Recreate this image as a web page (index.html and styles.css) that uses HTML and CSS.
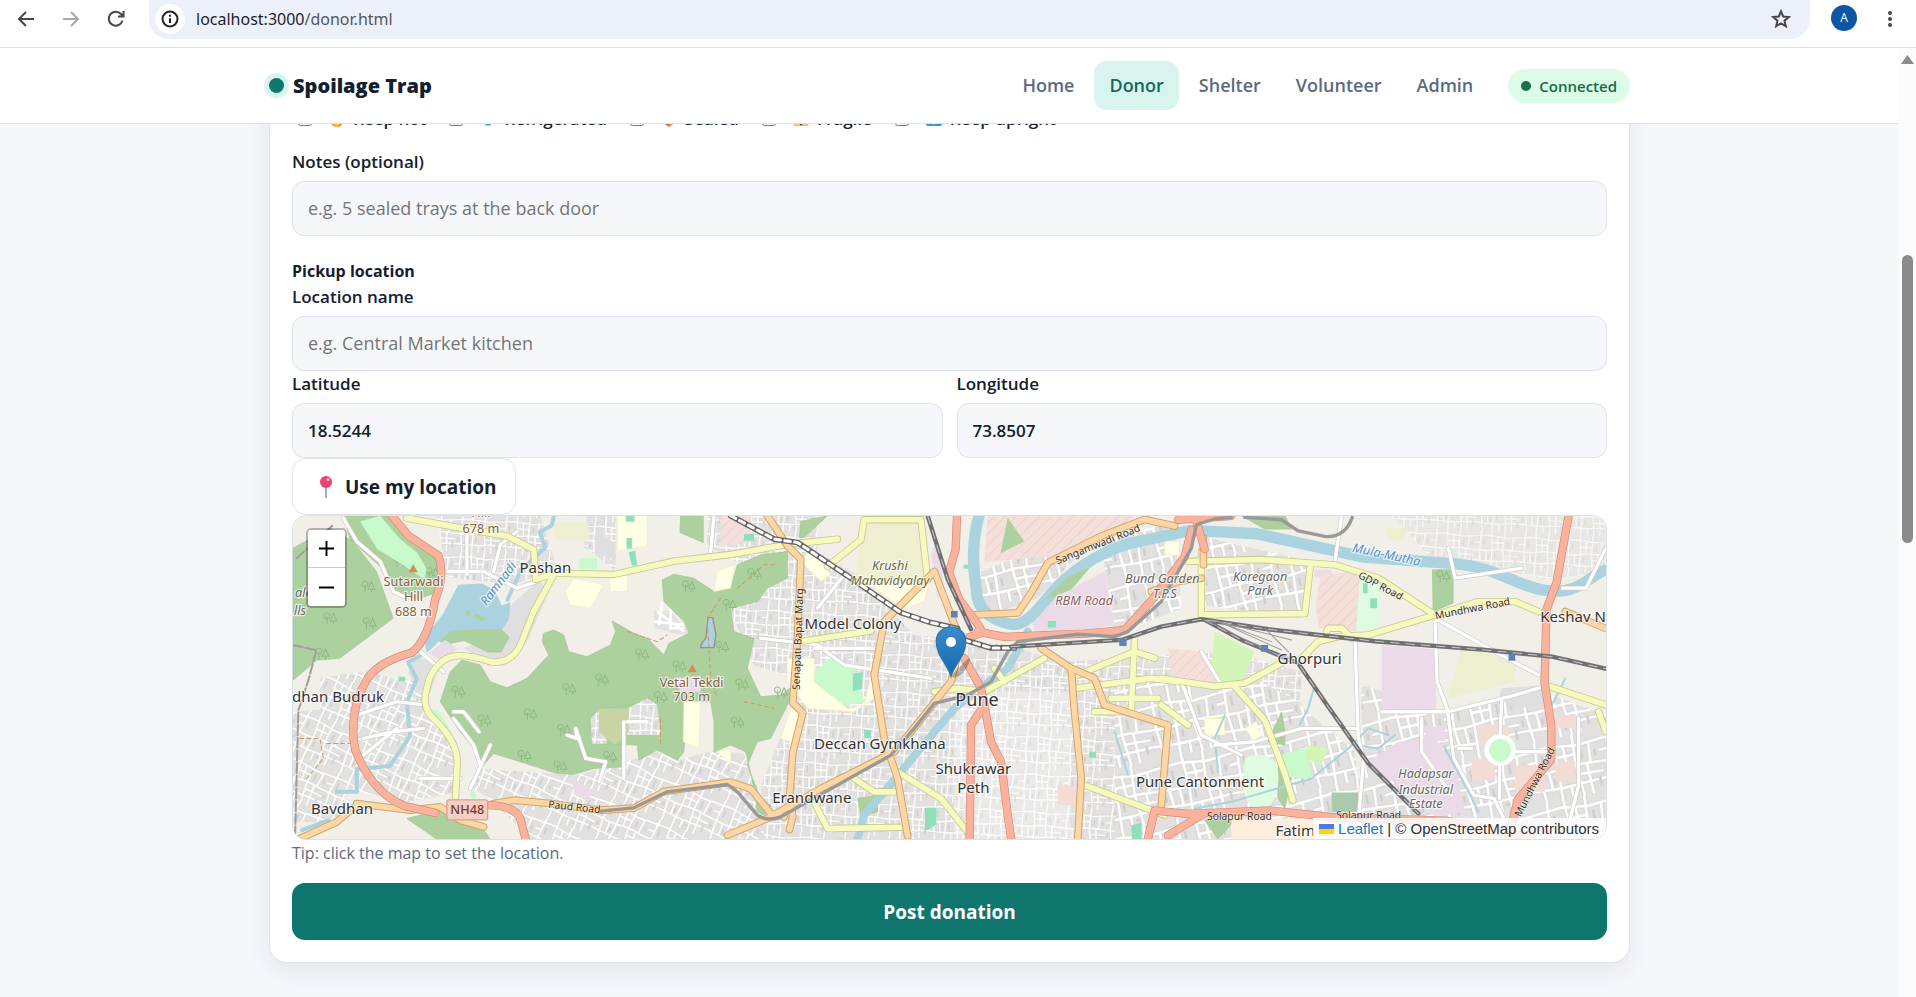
FILE: index.html
```html
<!DOCTYPE html>
<html lang="en">
<head>
<meta charset="utf-8">
<meta name="viewport" content="width=device-width, initial-scale=1">
<title>Spoilage Trap – Donor</title>
<link rel="stylesheet" href="styles.css">
</head>
<body>
<div class="browser">
  <button class="tool" type="button" aria-label="Back"><svg viewBox="0 0 20 20"><path d="M18 10H3M10 3l-7 7 7 7"/></svg></button>
  <button class="tool tool-off" type="button" aria-label="Forward"><svg viewBox="0 0 20 20"><path d="M2 10h15M10 3l7 7-7 7"/></svg></button>
  <button class="tool" type="button" aria-label="Reload"><svg viewBox="0 0 20 20"><path d="M16.500 11.500A7 7 0 1 1 15 5l2 2M17.500 2v5.500H12"/></svg></button>
  <div class="address">
    <button class="site-info" type="button" aria-label="Site information"><svg viewBox="0 0 20 20"><circle cx="10" cy="10" r="7.500"/><path d="M10 9.300v4.700M10 5.800v1.900"/></svg></button>
    <span class="url">localhost:3000<span class="url-path">/donor.html</span></span>
    <button class="tool star" type="button" aria-label="Bookmark"><svg viewBox="0 0 20 20"><path d="M10 2.300l2.200 5.200 5.600.5-4.300 3.700 1.300 5.500-4.800-2.900-4.800 2.900 1.300-5.500L2.200 8l5.600-.5z"/></svg></button>
  </div>
  <button class="avatar" type="button" aria-label="Profile">A</button>
  <button class="tool dots" type="button" aria-label="Menu"><svg viewBox="0 0 20 20"><circle cx="10" cy="4" r="2"/><circle cx="10" cy="10" r="2"/><circle cx="10" cy="16" r="2"/></svg></button>
</div>
<div class="viewport">
  <div class="document">
    <header class="topbar">
      <div class="topbar-inner">
        <a class="brand" href="#"><span class="brand-dot"></span>Spoilage Trap</a>
        <nav class="nav">
          <a href="#">Home</a>
          <a class="active" href="#">Donor</a>
          <a href="#">Shelter</a>
          <a href="#">Volunteer</a>
          <a href="#">Admin</a>
        </nav>
        <span class="status"><span class="status-dot"></span>Connected</span>
      </div>
    </header>
    <main class="page">
      <form class="card">
        <div class="checks">
          <label><input type="checkbox"><svg viewBox="0 0 18 18"><path d="M9 0c1 4 7 6 7 11a7 7 0 0 1-14 0c0-3 2-4 3-7l2 3z" fill="#e8832f"/><path d="M10 7c3 2 4 9-1 11-4-1-5-5-2-7l1 2z" fill="#fcc21b"/></svg>Keep hot</label>
          <label><input type="checkbox"><svg viewBox="0 0 18 18"><path d="M9 1v16M2 5l14 8M16 5L2 13M6 2l3 3 3-3M6 16l3-3 3 3" fill="none" stroke="#4fb3f5" stroke-width="2"/></svg>Refrigerated</label>
          <label><input type="checkbox"><svg viewBox="0 0 18 18"><path d="M9 1l7 4v8l-7 5-7-5V5z" fill="#b97549"/><path d="M9 9l7-4v8l-7 5z" fill="#d69667"/></svg>Sealed</label>
          <label><input type="checkbox"><svg viewBox="0 0 18 18"><path d="M9 1l9 16H0z" fill="#ffb871"/><path d="M9 6v6M9 14v2" stroke="#3d3026" stroke-width="2"/></svg>Fragile</label>
          <label><input type="checkbox"><svg viewBox="0 0 18 18"><rect width="18" height="17" rx="2" fill="#3d93e3"/><path d="M9 15V4M5 8l4-4 4 4" fill="none" stroke="#fff" stroke-width="2"/></svg>Keep upright</label>
        </div>
        <div class="field notes">
          <label for="notes">Notes (optional)</label>
          <input id="notes" type="text" placeholder="e.g. 5 sealed trays at the back door">
        </div>
        <h2>Pickup location</h2>
        <div class="field">
          <label for="place">Location name</label>
          <input id="place" type="text" placeholder="e.g. Central Market kitchen">
        </div>
        <div class="pair">
          <div class="field"><label for="lat">Latitude</label><input id="lat" type="text" value="18.5244"></div>
          <div class="field"><label for="lng">Longitude</label><input id="lng" type="text" value="73.8507"></div>
        </div>
        <button class="locate" type="button"><svg viewBox="0 0 18 24"><path d="M9 12v11" stroke="#8d969d" stroke-width="1.600"/><circle cx="9" cy="7" r="6" fill="#ee3f70"/><circle cx="11" cy="4.500" r="1.600" fill="#ffc0d2"/></svg>Use my location</button>
        <div class="map">
          <svg class="map-canvas" viewBox="39 33 3933 969" preserveAspectRatio="xMidYMid slice" role="img" aria-label="Map of Pune">
            <defs>
              <pattern id="streets" width="156" height="132" patternUnits="userSpaceOnUse" patternTransform="rotate(3) scale(.850)">
                <rect width="156" height="132" fill="#e3e1df"/>
                <path d="M0 20L50 16 110 24 156 20M0 68l42 2 60-6 54 4M0 104l60 4 96-4M22 0l-4 68 6 64M58 0l4 66-4 66M104 0l-4 64 6 68M136 20l-4 48M80 18l2 50M40 70l2 36M124 68l2 64M82 106v26M0 44l20-2M62 42h40M104 86l52 2" fill="none" stroke="#cfcdcb" stroke-width="9"/>
                <path d="M0 20L50 16 110 24 156 20M0 68l42 2 60-6 54 4M0 104l60 4 96-4M22 0l-4 68 6 64M58 0l4 66-4 66M104 0l-4 64 6 68M136 20l-4 48M80 18l2 50M40 70l2 36M124 68l2 64M82 106v26M0 44l20-2M62 42h40M104 86l52 2" fill="none" stroke="#fff" stroke-width="6"/>
                <path d="M32 30v22M72 78v18M116 34v22M146 40v14M8 80v14M50 84v14M146 98v20M92 118h10" stroke="#cfcccb" stroke-width="5"/>
              </pattern>
              <pattern id="streets-b" href="#streets" patternTransform="rotate(24)"/>
              <pattern id="streets-c" href="#streets" patternTransform="rotate(-12) scale(1.400)"/>
              <pattern id="hatch" width="24" height="24" patternUnits="userSpaceOnUse" patternTransform="rotate(45)"><rect width="24" height="24" fill="#f4e0da"/><path d="M0 0v24" stroke="#f2c9c2" stroke-width="4"/></pattern>
              <linearGradient id="pin" x1="0" y1="0" x2="0" y2="1"><stop offset="0" stop-color="#3a8ccb"/><stop offset="1" stop-color="#1467ae"/></linearGradient>
              <g id="tree-set" fill="none" stroke="#8dba82" stroke-width="3"><path d="M-10-16a9 9 0 1 0 1 0zM-9-6v24M10-14L0 8h20zM10 8v10"/></g>
            </defs>
            <rect x="39" y="33" width="3933" height="969" fill="#f2efe9"/>

            <!-- Built-up areas -->
            <path fill="url(#streets)" d="M470 33H780L830 190 700 240 640 235 500 215ZM920 33h85v165l-50-40-45-30ZM1280 33h330v130l-240 10-90-50Z"/>
            <path fill="url(#streets-b)" d="M120 520l120-20 180 30 20 100 90 80 10 150-160 30-200-40-60-120ZM39 620l120-10 60 160-40 180H39ZM590 790l300 20 180-50 60-20 60 26 110-30 90 10 60 150 60 0v106H750L640 890l-60-40ZM930 640l30-30 20 106-45 0ZM1050 600l60-20 30 110h-110Z"/>
            <path fill="#e3e1df" d="M1120 318l50 0 60 70-40 0-70-20Z"/>
            <path fill="none" stroke="#fff" stroke-width="8" d="M1130 320l80 60M1145 290l-10 70M1170 310l0 60 40 0M1120 350l90 10"/>
            <path fill="url(#streets)" d="M1350 320l110-60 110-140 160 90 170 180 280 30 160 50 500-30 220 60v502H1450l-10-160 90-220 0-110-110-30Z"/>
            <path fill="url(#streets-c)" d="M2100 200l250-100 60 30-140 150-170 60ZM2460 110l220-60 20 260-200 80ZM2780 100l310 70-30 170-290-40ZM2500 560l330-90 200 110 190 160 30 262H2500ZM3240 540l260 80 280-60 192 70v372H3240Z"/>
            <path fill="url(#streets)" d="M3330 33h640v170l-190 20-150-40-190-30Z" opacity=".6"/>
            <path fill="#fff" fill-opacity=".3" d="M2020 560h350v440h-350z"/>
            <path fill="#e0dfdf" d="M770 230l40 20-70 160-50 60-90-10-50-30 70-30 50-80ZM400 455l80 20-30 90-40-10-25-50ZM945 70l60 50v45l-60-20ZM3660 550l130-10v60l-90 10-50-30Z"/>

            <!-- Woods -->
            <g fill="#add19e" stroke="#9fc491" stroke-width="2">
              <path d="M190 33h140l90 80 60 60-10 90-60 20-60-20-30-60-110-100ZM39 130l110-60 70 40 70 90 50 140-160 120-70 6-70 60ZM1200 33h68v80l-70-30ZM500 375l90-8 66 0 30 30-24 44-40 0-70-34-50 10-30-10Z"/>
              <path d="M480 590L510 500 545 465 600 480 630 530 680 548 740 520 805 450 785 410 790 385 820 375 850 390 865 440 920 455 990 420 1005 380 995 348 1060 385 1100 400 1150 450 1165 415 1225 385 1210 350 1150 290 1145 225 1180 208 1240 220 1300 260 1350 250 1370 180 1440 150 1520 140 1520 220 1460 250 1430 290 1350 310 1360 380 1420 400 1400 490 1440 575 1500 570 1540 540 1530 580 1500 640 1470 700 1430 710 1400 780 1440 880 1470 900 1450 930 1430 920 1420 850 1395 740 1350 720 1300 740 1300 650 1290 590 1220 590 1210 740 1190 765 1130 735 1075 765 1070 720 940 715 925 640 960 610 1050 600 1110 580 1120 600 1040 650 1025 785 940 790 880 808 830 805 720 770 640 745 600 790 590 740 540 680Z"/>
              <path d="M380 940l120-30 110 64 20 28H470ZM1560 50l80-17-70 65-14 0ZM2180 40l50 70-72 35ZM1730 880l60-10v50l-50 10ZM2880 33h130l20 40-80 0ZM3452 195h62v100l-60 24ZM3000 620l10 60 0 40-50-10ZM2770 945h90l-50 57ZM2990 740l40 80-20 90-20-30Z"/>
            </g>
            <path fill="url(#streets)" d="M930 640l30-30 20 106-45 0ZM1040 610l60-30 30 20 10 90h-100Z"/>
            <path fill="#abc9ac" d="M3150 862h80v58h-80z"/>
            <use href="#tree-set" x="360" y="168"/><use href="#tree-set" x="264" y="245"/><use href="#tree-set" x="150" y="340"/><use href="#tree-set" x="268" y="355"/><use href="#tree-set" x="126" y="446"/><use href="#tree-set" x="456" y="205"/><use href="#tree-set" x="534" y="560"/><use href="#tree-set" x="612" y="646"/><use href="#tree-set" x="750" y="628"/><use href="#tree-set" x="866" y="552"/><use href="#tree-set" x="964" y="524"/><use href="#tree-set" x="850" y="674"/><use href="#tree-set" x="732" y="752"/><use href="#tree-set" x="840" y="784"/><use href="#tree-set" x="988" y="756"/><use href="#tree-set" x="1084" y="448"/><use href="#tree-set" x="1196" y="484"/><use href="#tree-set" x="1224" y="244"/><use href="#tree-set" x="1324" y="426"/><use href="#tree-set" x="1140" y="576"/><use href="#tree-set" x="1420" y="206"/><use href="#tree-set" x="1346" y="300"/><use href="#tree-set" x="1384" y="538"/><use href="#tree-set" x="1370" y="652"/><use href="#tree-set" x="1500" y="562"/><use href="#tree-set" x="3484" y="214"/>

            <!-- Parks, schools, campuses, industry -->
            <path fill="#c8facc" d="M240 50l60-17 60 70 50 40 30 50-8 30-60-40-80-50ZM1560 530l90-70 70 20 30 110-100 20-40-40ZM445 615l30 0 34 60-30 0ZM3000 750l60-20 20 0 10 90-80-5ZM895 160h55v32h-55zM575 850l15 20-10 14-12-14ZM3610 700h90v60h-90z"/>
            <path fill="#dffce2" d="M2890 760q60-30 96 20 16 70-20 120-40 30-66-10-20-70-10-130ZM3235 210l60 30-6 130-65 10Z"/>
            <path fill="#ffffe5" d="M880 220l90 20-40 70-60-10-15-40ZM985 210l56 0v50h-50ZM1010 33h90v90l-90 15ZM1520 460h80v70l100 80 50-10 30-130 0 110-60 40-140-10-60-80ZM1530 610l36 10-10 100-56-20ZM1210 590l50 0-6 140-46-20ZM1840 150l60-80 50 140-20 80-60 20-90-60 40-60ZM1590 130l60 80-30 20-60-60ZM2650 110h44v40h-44zM2890 670l34-20 16 40-20 20ZM1310 200l50-20-10 70-50 10ZM1310 740l40-10v50ZM2770 640h60v50h-60z" stroke="#f0efb8" stroke-width="2"/>
            <path fill="#edefd0" d="M1750 60l180-20 0 180-50 20-160-10ZM3540 420l160 50v60l-200 50ZM820 55h105v50l-100 0ZM3310 70l70 0-20 40-40-6Z"/>
            <path fill="#c9d3a3" d="M955 610h90v70l-40 40-50-40Z"/>
            <path fill="#d4f5b8" d="M2800 380l120 60-40 90-60 10-30-60ZM3080 720l60 10-20 50-50-20Z"/>
            <path fill="#ebdbe8" d="M445 445l50-40 36 26-40 40ZM3300 420l165 14-2 180H3300ZM3260 770l90-60 110-8 60 80 30 140-90 10ZM870 815l65 40-10 35-40-20ZM1180 520l80-8v50l-60 0ZM3430 660l60 12v36l-60 0ZM1950 150l20 130 20-30-20-150ZM3100 195l50 0v24l-50 0ZM2240 320l230-120 30 160-230 40Z"/>
            <path fill="url(#hatch)" d="M2120 33h440l-50 60-200 60-200 20ZM3116 210l120-10-12 180-110-10-12-60ZM2660 430l110 10 30 90-130-12ZM1320 33h90v80l-90 10Z"/>
            <path fill="#add19e" d="M2180 40l50 70-72 35Z"/>
            <path fill="#f4dcd6" d="M3590 660h90v60h-90zM3700 780h90v80h-90zM3820 630h66v38h-66zM3570 760h70v65h-70zM2330 840h60v60h-60zM3820 770h60v60h-60z"/>
            <path fill="#ffeedd" d="M2850 940h270v62h-270z"/>
            <path fill="#8edfba" d="M1036 33h26v18h-26zM1038 100h16v32h-16zM1044 142l20-4 6 44h-16ZM355 515h20v14h-20zM1716 506l30-4-2 50-28 6ZM2048 180h18v12h-18zM1932 908h34v50l-34 20ZM2550 960l30-8 2 50h-30ZM3244 235h14v30h-14zM3266 280h20v30h-20zM1750 675h20v24h-20zM2300 348h24v20h-24zM2424 740h20v18h-20zM1390 88h30v20h-30z"/>

            <!-- Water -->
            <path fill="#aad3df" d="M534 240l70-4 40 20 20 46 26-10-4 50-20 30-66 0-90 6-70 66-10-40 60-80Z"/>
            <path fill="#aad3df" stroke="#a58a8a" stroke-width="4" d="M1262 418l14-20 6-60 14 0 10 50-6 40h-40z"/>
            <path fill="#add19e" d="M556 320l10-4 4 14-10 4zM580 326l20 4 14 14-10 4-20-10z"/>
            <g fill="none" stroke="#aad3df" stroke-linecap="round" stroke-linejoin="round">
              <path stroke-width="12" d="M820 36l-6 26-36 20 16 46-26 26-46 40-40 90M420 452l-36 20 26 50-30 70 10 100-60 90-90 10M230 790v70l-60 0M66 975l80-30"/>
              <path stroke-width="34" d="M2094 33c-20 70-20 150-8 220 0 60 40 90 100 104 50 10 80-40 140-110 60-60 150-120 260-140l140-30 200 10 320 70 280 20c120 10 180 70 270 80 90 10 110-30 170-60"/>
              <path stroke-width="24" d="M2240 380l-60 110-70 50-90 70-110 130-100 120-60 70-20 72"/>
              <path stroke-width="6" d="M2830 630l-30 70 10 100M3100 540l-20 70-26 50M2740 910l110-20 240-70 110-90 60-60 60 20M3220 720l70 10 50-40M3490 730l70 130 30 60M3850 520l-40 80M2500 680l40 130"/>
            </g>
            <path fill="#add19e" d="M2300 275l60-60 70-30-60 70-80 30Z"/>

            <!-- Minor roads -->
            <g fill="none" stroke-linejoin="round" stroke-linecap="round">
              <path stroke="#cfccc8" stroke-width="14" d="M190 40l40 70 70 60 40 90 40 20M500 200l110 0 100 50 60-20M560 60v150M640 200l20-80 50-40M230 630l120-40 90 10M250 700l90-20 90-10M420 440l70 60M350 670l-100 80M520 620l30 0 46 60M520 640l60 80 20 60M630 720l-60 130M420 820l120 0M860 690l30 10-4-30 30 90 60 10-20 60M1030 650v170M1040 650h60M1300 33l-10 110M1440 400l170 20 80 60 260 40M1600 430h200M1690 210l-80 100M3220 400l10 300 16 60-20 240M3460 350l6 180 30 80 20 150 60 110 60 10 30 60M3300 620h200l200-50 80-24M3460 340l160 90 150 80M2700 530l60 160 120 60M2760 440l60 100M3660 580l-6 120M3653 760v120M3570 730h-40M3700 740h100M3420 640v100l90 130M3180 33l-20 140M3500 130l20 90 200-30M3972 130l-60 120-70 0M2800 720l120-10 140-40h160M3890 640v200l-30 120"/>
              <path stroke="#fff" stroke-width="10" d="M190 40l40 70 70 60 40 90 40 20M500 200l110 0 100 50 60-20M560 60v150M640 200l20-80 50-40M230 630l120-40 90 10M250 700l90-20 90-10M420 440l70 60M350 670l-100 80M520 620l30 0 46 60M520 640l60 80 20 60M630 720l-60 130M420 820l120 0M860 690l30 10-4-30 30 90 60 10-20 60M1030 650v170M1040 650h60M1300 33l-10 110M1440 400l170 20 80 60 260 40M1600 430h200M1690 210l-80 100M3220 400l10 300 16 60-20 240M3460 350l6 180 30 80 20 150 60 110 60 10 30 60M3300 620h200l200-50 80-24M3460 340l160 90 150 80M2700 530l60 160 120 60M2760 440l60 100M3660 580l-6 120M3653 760v120M3570 730h-40M3700 740h100M3420 640v100l90 130M3180 33l-20 140M3500 130l20 90 200-30M3972 130l-60 120-70 0M2800 720l120-10 140-40h160M3890 640v200l-30 120"/>
              <circle cx="3655" cy="735" r="40" fill="#c8facc" stroke="#fff" stroke-width="14"/>
              <path stroke="#a19b9e" stroke-width="6" stroke-dasharray="30 8" d="M39 420l70 16-24 90-30 90-10 386M50 160l110-100"/>
              <path stroke="#c99b62" stroke-width="3" stroke-dasharray="12 9" d="M1320 280l-40 60 10 180 20 60M1140 640v80M1040 380l90 30 30-20M60 700l60 0 10 60-50 60M140 715h90M1370 250l80-70 40 0M1390 590l90 20"/>

              <!-- Secondary roads -->
              <path stroke="#c6c98e" stroke-width="22" d="M380 40l130 24 170 30 80 40 6 90 60-20M820 205l180 4 180-40 170-20 170-30 150-16M820 210l-60 110-40 100q-30 60-90 50-90-30-130-10-50 30-60 90-20 60 30 100 70 70 60 140l-4 84M1640 185l100-80 10-60 170 0 20 180M1570 408l200-30M1960 560l70-10 80 10 180-100M2140 490l30 40M2390 510l170-70 60 20M2380 550l230-30 80 10M2490 580l140 0M2440 620h100M2560 400l-10 220M2720 170l220-6 220 16 130 40 160 104M2760 140v190l310-4 16-140M3210 400l-30-30h-40l-5 10M3050 470l60-60 60-15 90-5 200-60 130-40 110 0 70 30M2640 520l160 24 90-10 110-60M2860 545l90 100 60 160 24 80M2640 600l80 60M3790 540l182 60M2410 840l240 90M1600 890l40 80 230-4M1720 820l60 40 60 0M1850 800l130 80 80 100M3950 620l22 60"/>
              <path stroke="#f7fabf" stroke-width="17" d="M380 40l130 24 170 30 80 40 6 90 60-20M820 205l180 4 180-40 170-20 170-30 150-16M820 210l-60 110-40 100q-30 60-90 50-90-30-130-10-50 30-60 90-20 60 30 100 70 70 60 140l-4 84M1640 185l100-80 10-60 170 0 20 180M1570 408l200-30M1960 560l70-10 80 10 180-100M2140 490l30 40M2390 510l170-70 60 20M2380 550l230-30 80 10M2490 580l140 0M2440 620h100M2560 400l-10 220M2720 170l220-6 220 16 130 40 160 104M2760 140v190l310-4 16-140M3210 400l-30-30h-40l-5 10M3050 470l60-60 60-15 90-5 200-60 130-40 110 0 70 30M2640 520l160 24 90-10 110-60M2860 545l90 100 60 160 24 80M2640 600l80 60M3790 540l182 60M2410 840l240 90M1600 890l40 80 230-4M1720 820l60 40 60 0M1850 800l130 80 80 100M3950 620l22 60"/>

              <!-- Primary roads -->
              <path stroke="#cfa66c" stroke-width="23" d="M60 1000l110-50 60-50M230 895l160 20 90-10 60 40 70 20M640 895l60-10 110 10 150 20 100-6 90-50 200-28 60 20 60 74 40 10M1340 990l120-50 160-90 220-110 50-60 120-150 30-120-80-210-150 150-30 160 30 190 40 120 30 172M1460 33l60 90 40 40-10 240-14 190 30 30-30 120-10 140 10 50-10 40M2080 330l130-6 40-60 50-90 160-80 130-50 90 20M2280 430l90 60 70 30 30 80 190 60-20 240M2370 490l10 130 20 200-10 182M2610 260l80-30 70-10M2766 100v80M3850 320l120 50"/>
              <path stroke="#fcd6a4" stroke-width="17" d="M60 1000l110-50 60-50M230 895l160 20 90-10 60 40 70 20M640 895l60-10 110 10 150 20 100-6 90-50 200-28 60 20 60 74 40 10M1340 990l120-50 160-90 220-110 50-60 120-150 30-120-80-210-150 150-30 160 30 190 40 120 30 172M1460 33l60 90 40 40-10 240-14 190 30 30-30 120-10 140 10 50-10 40M2080 330l130-6 40-60 50-90 160-80 130-50 90 20M2280 430l90 60 70 30 30 80 190 60-20 240M2370 490l10 130 20 200-10 182M2610 260l80-30 70-10M2766 100v80M3850 320l120 50"/>

              <!-- Trunk roads -->
              <path stroke="#d18b78" stroke-width="25" d="M335 33l50 60 90 60q20 60-10 130-20 120-70 160-110 30-140 90-50 90-30 200 50 130 150 170l90 20M620 900q80 0 100 40l16 62M2028 33l-4 100-20 70 30 80 60 80 10 20-40 14M2090 380l80 16 240-10 120-10 90-100 90-120 20-80M2740 33l30 100M2690 45l160-12M2050 460l50 90 10 50-40 60-4 342M2110 600l20 110 30 60 20 160 10 70M3860 33l-36 200-30 80-6 220 20 130 0 100-100 120-30 119M2600 1000l20-84 100 10 250-10 180 20 340 10 260 52M2760 930l-100 60"/>
              <path stroke="#f9b29c" stroke-width="21" d="M335 33l50 60 90 60q20 60-10 130-20 120-70 160-110 30-140 90-50 90-30 200 50 130 150 170l90 20M620 900q80 0 100 40l16 62M2028 33l-4 100-20 70 30 80 60 80 10 20-40 14M2090 380l80 16 240-10 120-10 90-100 90-120 20-80M2740 33l30 100M2690 45l160-12M2050 460l50 90 10 50-40 60-4 342M2110 600l20 110 30 60 20 160 10 70M3860 33l-36 200-30 80-6 220 20 130 0 100-100 120-30 119M2600 1000l20-84 100 10 250-10 180 20 340 10 260 52M2760 930l-100 60"/>

              <!-- Metro and railways -->
              <path stroke="#999" stroke-width="10" d="M960 918L1060 908 1160 860 1340 838 1370 860 1430 930Q1460 950 1500 935L1830 750 1900 670 1960 595 2060 570 2130 530 2180 440 2210 410 2390 388 2500 395 2540 380 2640 290 2730 130 2745 60 2800 42 2850 38M2890 38L3000 45 3050 78 3130 95Q3190 100 3212 38"/>
              <path stroke="#666" stroke-width="17" d="M1350 33l130 70 70 10 150 100 160 110 90 30 80 18M2050 405l80 24 70 0"/>
              <path stroke="#fff" stroke-width="9" stroke-dasharray="17 13" d="M1350 33l130 70 70 10 150 100 160 110 90 30 80 18M2050 405l80 24 70 0"/>
              <path stroke="#707070" stroke-width="13" d="M1940 33l60 190 70 150M2190 425l330-20 120-40 120-22 200 30 320 36 330 26 200 20 302 68M2770 345l110 60 170 70 90 130 120 170 150 150"/>
              <path stroke="#c9c9c9" stroke-width="3" stroke-dasharray="26 20" d="M1940 33l60 190 70 150M2190 425l330-20 120-40 120-22 200 30 320 36 330 26 200 20 302 68M2770 345l110 60 170 70 90 130 120 170 150 150"/>
              <path stroke="#999" stroke-width="3" d="M2800 345l200 90M2790 345l240 60M2810 350l160 60M2780 350l250 120M2950 370l80 80"/>
            </g>
            <path fill="#6281b8" d="M2010 318h20v20h-20zM2514 401h22v22h-22zM2938 420h22v20h-22zM3680 447h20v20h-20z"/>
            <path fill="#d08f55" d="M399 178l14 24h-28zM1235 478l14 24h-28z"/>

            <!-- Labels -->
            <g class="lab" text-anchor="middle">
              <g class="town"><text x="795" y="204">Pashan</text><text x="174" y="592">dhan Budruk</text><text x="186" y="925">Bavdhan</text><text x="1716" y="372">Model Colony</text><text x="1797" y="731">Deccan Gymkhana</text><text x="1593" y="894">Erandwane</text><text x="2077" y="806">Shukrawar</text><text x="2077" y="864">Peth</text><text x="2756" y="845">Pune Cantonment</text><text x="3084" y="478">Ghorpuri</text><text x="3041" y="992">Fatim</text></g>
              <text class="town" text-anchor="start" x="3775" y="352">Keshav N</text>
              <text class="city" x="2088" y="604">Pune</text>
              <g class="peak"><text x="400" y="243">Sutarwadi</text><text x="400" y="288">Hill</text><text x="400" y="332">688 m</text><text x="602" y="38">Hill</text><text x="602" y="84">678 m</text><text x="1233" y="545">Vetal Tekdi</text><text x="1233" y="588">703 m</text></g>
              <g class="area"><text x="70" y="276">ale</text><text x="60" y="330">lls</text><text class="olive" x="1827" y="195">Krushi</text><text class="olive" x="1828" y="240">Mahavidyalay</text><text class="brown" x="2409" y="300">RBM Road</text><text x="2643" y="235">Bund Garden</text><text x="2650" y="280">T.P.S</text><text x="2936" y="227">Koregaon</text><text x="2936" y="271">Park</text><text x="3432" y="820">Hadapsar</text><text x="3432" y="865">Industrial</text><text x="3432" y="909">Estate</text></g>
              <g class="road"><text transform="translate(881 916) rotate(6)">Paud Road</text><text transform="translate(1562 403) rotate(-88)">Senapati Bapat Marg</text><text transform="translate(2454 128) rotate(-22)">Sangamwadi Road</text><text transform="translate(3292 252) rotate(28)">GDP Road</text><text transform="translate(3574 321) rotate(-11)">Mundhwa Road</text><text x="2874" y="943">Solapur Road</text><text x="3261" y="941">Solapur Road</text><text transform="translate(3768 835) rotate(-63)">Mundhwa Road</text></g>
              <g class="river"><text transform="translate(664 244) rotate(-53)">Ramnadi</text><text transform="translate(3312 162) rotate(12)">Mula-Mutha</text></g>
            </g>
            <rect x="500" y="884" width="122" height="60" rx="6" fill="#f4cfc4" stroke="#d9a294" stroke-width="4"/>
            <text class="shield" x="561" y="927" text-anchor="middle">NH48</text>

            <!-- Marker -->
            <path d="M2010 514q70-80 54-40t-44 44z" fill="#000" opacity=".25"/>
            <path d="M2010 514c-12-40-44-60-44-106a44 42 0 0 1 88 0c0 46-32 66-44 106z" fill="url(#pin)" stroke="#2f74ad" stroke-width="4"/>
            <circle cx="2010" cy="411" r="15" fill="#fff"/>
          </svg>
          <div class="zoom"><button type="button" aria-label="Zoom in"><svg viewBox="0 0 18 18"><path d="M9 1v16M1 9h16"/></svg></button><button type="button" aria-label="Zoom out"><svg viewBox="0 0 18 18"><path d="M1 9h16"/></svg></button></div>
          <div class="credit"><a href="#"><svg viewBox="0 0 12 8"><path fill="#4c7be1" d="M0 0h12v4H0z"/><path fill="#ffd500" d="M0 4h12v4H0z"/></svg>Leaflet</a> | © OpenStreetMap contributors</div>
        </div>
        <p class="tip">Tip: click the map to set the location.</p>
        <button class="submit" type="submit">Post donation</button>
      </form>
    </main>
  </div>
  <div class="scrollbar" aria-hidden="true"><span class="scroll-arrow"></span><span class="scroll-thumb"></span></div>
</div>
</body>
</html>
```
FILE: styles.css
```css
* { box-sizing: border-box; }
body {
  margin: 0;
  height: 100vh;
  display: flex;
  flex-direction: column;
  overflow: hidden;
  font: 500 17px/26px "Open Sans", "Noto Sans", sans-serif;
  color: #13202e;
  background: #f5f7fb;
}
button, input { font: inherit; color: inherit; }
a { text-decoration: none; color: inherit; }

.browser {
  flex: none;
  display: flex;
  align-items: flex-start;
  background: #fff;
  border-bottom: 1px solid #dfe2e6;
  padding: 0 11px 8px 11px;
  color: #474747;
}
.tool { border: 0; background: none; padding: 8px 0 0; width: 30px; height: 30px; margin-right: 15px; }
.tool svg { display: block; width: 20px; height: 20px; margin: auto; fill: none; stroke: currentColor; stroke-width: 2; }
.tool-off { color: #a9a9a9; }
.address {
  flex: 1;
  display: flex;
  align-items: center;
  height: 39px;
  margin-left: 3px;
  padding: 0 6px 2px;
  background: #ebf0fa;
  border-radius: 0 0 20px 20px;
}
.site-info { width: 30px; height: 30px; padding: 0; border: 0; border-radius: 50%; background: #fff; }
.site-info svg { display: block; width: 20px; margin: auto; fill: none; stroke: #222; stroke-width: 2; }
.url { flex: 1; margin-left: 11px; font-family: "Noto Sans", sans-serif; font-weight: 400; font-size: 16px; color: #1f1f1f; }
.url-path { color: #55585c; }
.star { margin: 0 8px 0 0; padding: 0; }
.avatar { width: 26px; height: 26px; margin: 5px 18px 0 21px; padding: 0; border: 0; border-radius: 50%; background: #0b57a4; color: #fff; font-size: 12px; line-height: 26px; }
.dots { margin: 0; }
.dots svg { fill: currentColor; stroke: none; }

.viewport { flex: 1; min-height: 0; display: grid; grid-template-columns: 1fr 17px; }
.document { overflow: hidden; }
.topbar { position: relative; z-index: 2; background: #fff; border-bottom: 1px solid #dde4ec; }
.topbar-inner { max-width: 1361px; margin: 0 auto; padding: 13px 0; display: flex; align-items: center; }
.brand { display: flex; align-items: center; gap: 9px; margin-right: auto; font-size: 20px; font-weight: 800; }
.brand-dot { width: 15px; height: 15px; border-radius: 50%; background: #0f766e; box-shadow: 0 0 0 5px #d9f3ef; }
.nav { display: flex; gap: 5px; }
.nav a { padding: 12px 15px; border-radius: 13px; font-size: 18px; line-height: 25px; font-weight: 600; color: #5b6b7f; }
.nav .active { background: #d9f3ef; color: #0f6b5c; }
.status { display: flex; align-items: center; gap: 8px; margin-left: 20px; padding: 5px 13px; border-radius: 17px; background: #dcfce7; color: #166b45; font-size: 15px; line-height: 24px; font-weight: 600; }
.status-dot { width: 10px; height: 10px; border-radius: 50%; background: #15724a; }

.page { max-width: 1361px; margin: -28px auto 0; }
.card { padding: 10px 22px 22px; background: #fff; border: 1px solid #dde4ec; border-radius: 0 0 18px 18px; box-shadow: 0 8px 24px rgba(20, 35, 55, .08); }
.checks { display: flex; gap: 23px; padding-left: 6px; font-weight: 600; line-height: 24px; }
.checks label { display: flex; align-items: center; gap: 8px; }
.checks input { width: 14px; height: 14px; margin: 0 9px 0 0; }
.checks svg { width: 16px; height: 18px; }
.field { display: flex; flex-direction: column; font-weight: 600; }
.field input { width: 100%; height: 55px; margin-top: 6px; padding: 0 15px; border: 1px solid #dde4ec; border-radius: 12px; background: #f5f7fb; }
.field input::placeholder { color: #757575; opacity: 1; font-size: 18px; font-weight: 500; }
.notes { margin: 18px 0 22px; }
h2 { margin: 0; font-size: 16px; line-height: 26px; font-weight: 700; }
.pair { display: grid; grid-template-columns: 1fr 1fr; gap: 14px; }
.locate { display: flex; align-items: center; gap: 10px; height: 57px; padding: 0 19px 0 24px; border: 1px solid #dde4ec; border-radius: 14px; background: #fff; font-size: 19px; font-weight: 700; }
.locate svg { width: 18px; height: 24px; }
.map { position: relative; height: 325px; border: 1px solid #d8e2ea; border-radius: 14px; overflow: hidden; }
.map-canvas { display: block; width: 100%; height: 100%; }
.lab { font-family: "Noto Sans", sans-serif; paint-order: stroke; stroke: rgba(255, 255, 255, .7); stroke-width: 7px; stroke-linejoin: round; fill: #333; }
.lab text { paint-order: stroke; }
.town { font-size: 45px; font-weight: 400; }
.city { font-size: 54px; font-weight: 400; }
.peak { font-size: 38px; font-weight: 400; fill: #8b5f3c; }
.area { font-size: 38px; font-weight: 400; font-style: italic; fill: #686868; }
.olive { fill: #6b6b3c; }
.brown { fill: #8d5f5f; }
.road { font-size: 31px; font-weight: 400; stroke-width: 3px; fill: #3a2c14; }
.river { font-size: 38px; font-weight: 400; font-style: italic; fill: #5a91bd; }
.shield { font: 500 38px "Noto Sans", sans-serif; fill: #7d3a2c; }
.zoom { position: absolute; left: 13px; top: 12px; display: flex; flex-direction: column; border: 2px solid rgba(0, 0, 0, .25); border-radius: 5px; background-clip: padding-box; }
.zoom button { width: 37px; height: 38px; padding: 0; border: 0; background: #fff; }
.zoom svg { display: block; width: 17px; height: 17px; margin: auto; stroke: #000; stroke-width: 2; }
.zoom button:first-child { border-bottom: 1px solid #ccc; border-radius: 3px 3px 0 0; }
.zoom button:last-child { border-radius: 0 0 3px 3px; }
.credit { position: absolute; right: 0; bottom: 0; padding: 0 7px 0 6px; background: rgba(255, 255, 255, .8); font: 400 15px/21px "Liberation Sans", sans-serif; color: #333; }
.credit a { color: #1d78b5; }
.credit svg { width: 15px; height: 10px; margin-right: 4px; }
.tip { margin: 0 0 17px; font-size: 16px; font-weight: 400; color: #5b6b7f; }
.submit { display: block; width: 100%; height: 57px; border: 0; border-radius: 13px; background: #0f766e; color: #fff; font-size: 19px; font-weight: 700; }

.scrollbar { display: grid; grid-template-rows: 207fr 288fr 454fr; justify-items: center; background: #fcfcfc; }
.scroll-arrow { width: 13px; height: 9px; margin-top: 7px; background: #8b8b8b; clip-path: polygon(50% 0, 100% 100%, 0 100%); }
.scroll-thumb { width: 11px; border-radius: 6px; background: #8b8b8b; }
```
